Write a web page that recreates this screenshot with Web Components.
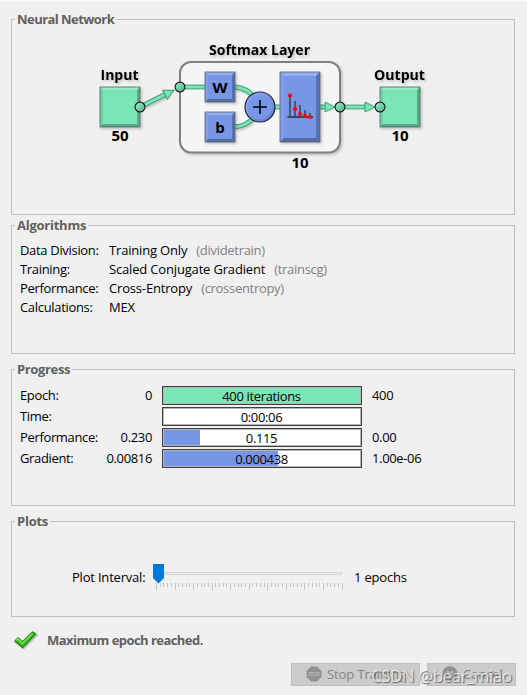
<!DOCTYPE html>
<html lang="en">
<head>
<meta charset="utf-8">
<title>Neural Network Training</title>
<style>
  body {
    margin: 0;
    background: #f0f0f0;
    color: #000;
    font: 13px/19px "Open Sans", "Noto Sans", sans-serif;
  }
</style>
</head>
<body>
<training-window></training-window>

<script>
  class GroupPanel extends HTMLElement {
    constructor() {
      super();
      const shadow = this.attachShadow({ mode: 'open' });
      shadow.innerHTML = `
        <style>
          :host {
            display: block;
            box-sizing: border-box;
            border: 1px solid #bfbfbf;
          }
          h2 {
            width: fit-content;
            margin: -9px 0 0 3px;
            padding: 0 2px;
            background: #f0f0f0;
            color: #606060;
            font-size: 13px;
            line-height: 16px;
            font-weight: 700;
            letter-spacing: var(--title-spacing, -0.55px);
          }
        </style>
        <h2>${this.getAttribute('label')}</h2>
        <slot></slot>
      `;
    }
  }

  class NetworkDiagram extends HTMLElement {
    constructor() {
      super();
      const shadow = this.attachShadow({ mode: 'open' });
      // Square block with bevelled edges
      const block = (x, y, w, h, b, c) => `
        <g filter="url(#soft)">
          <rect x="${x}" y="${y}" width="${w}" height="${h}" fill="${c[0]}"/>
          <path d="M${x} ${y}h${w}l${-b} ${b}h${2 * b - w}z" fill="${c[1]}"/>
          <path d="M${x} ${y}v${h}l${b} ${-b}v${2 * b - h}z" fill="${c[2]}"/>
          <path d="M${x + w} ${y}v${h}l${-b} ${-b}v${2 * b - h}z" fill="${c[3]}"/>
          <path d="M${x} ${y + h}h${w}l${-b} ${-b}h${2 * b - w}z" fill="${c[4]}"/>
          <rect x="${x}" y="${y}" width="${w}" height="${h}" fill="none" stroke="#58606c" stroke-width=".8"/>
        </g>`;
      const green = ['#7ae6b5', '#92efc5', '#6ed2a3', '#5aaa86', '#57a582'];
      const blue = ['#7896e6', '#94aef2', '#819eea', '#566fb0', '#546ba7'];
      const port = (x, y) => `<circle cx="${x}" cy="${y}" r="4.9" fill="url(#port)" stroke="#222" stroke-width="1.2"/>`;
      const wire = d => `
        <path d="${d}" fill="none" stroke="#469e77" stroke-width="4.8"/>
        <path d="${d}" fill="none" stroke="#7ae6b5" stroke-width="2.8"/>`;
      const head = (x, y, angle) => `
        <path d="M-5 -5L5 0L-5 5Z" transform="translate(${x} ${y}) rotate(${angle})" fill="#7ae6b5" stroke="#3c9870" stroke-width="1"/>`;
      const stems = [[290, 95.5, 96], [295, 109, 101], [300, 114, 105], [305, 116, 110], [310, 117, 113]];

      shadow.innerHTML = `
        <style>
          :host { display: block; margin-top: -7px; }
          svg { display: block; }
          text { font: 700 15px "Open Sans", "Noto Sans", sans-serif; text-anchor: middle; }
          .titles { filter: url(#soft); }
        </style>
        <svg width="502" height="192" viewBox="12 20 502 192">
          <defs>
            <filter id="soft" x="-20%" y="-20%" width="150%" height="150%">
              <feDropShadow dx="1.5" dy="1.5" stdDeviation="1" flood-color="#000" flood-opacity=".22"/>
            </filter>
            <linearGradient id="port" x1="0" y1="0" x2="1" y2="1">
              <stop offset="0" stop-color="#94f0c8"/>
              <stop offset="1" stop-color="#57ad87"/>
            </linearGradient>
            <linearGradient id="sum" x1="0" y1="0" x2="1" y2="1">
              <stop offset=".25" stop-color="#86a2ee"/>
              <stop offset="1" stop-color="#5d78bf"/>
            </linearGradient>
          </defs>
          <rect x="180" y="62" width="160" height="90.5" rx="11" fill="#f5f5f5" stroke="#808080" stroke-width="2" filter="url(#soft)"/>
          ${block(100, 87, 40, 40, 3, green)}
          ${block(380, 87, 40, 40, 3, green)}
          <g filter="url(#soft)">
            ${wire('M140 107L167 93.5')}
            ${wire('M235 87Q247 88 254 97')}
            ${wire('M235 127Q247 126 254 117')}
          </g>
          ${wire('M180 87H206')}
          ${wire('M272 107H326')}
          ${wire('M340 107H366')}
          ${head(169.5, 92.5, -27)}
          ${head(330, 107, 0)}
          ${head(370, 107, 0)}
          ${block(205, 72, 30, 30, 3, blue)}
          ${block(205, 112, 30, 30, 3, blue)}
          ${block(280, 72, 40, 70, 4, blue)}
          <circle cx="260" cy="107" r="15" fill="url(#sum)" stroke="#20263a" stroke-width="1.2"/>
          <circle cx="260" cy="107" r="12" fill="#7896e6"/>
          <path d="M253 107H267M260 100V114" stroke="#000" stroke-width="1.6"/>
          ${port(140, 107)}${port(180, 87)}${port(340, 107)}${port(380, 107)}
          <path d="M287.5 117H313" stroke="#111" stroke-width="1.2"/>
          ${stems.map(s => `<path d="M${s[0]} ${s[2]}V117" stroke="#333d55" stroke-width="1.4"/>`).join('')}
          ${stems.map(s => `<circle cx="${s[0]}" cy="${s[1]}" r="2.1" fill="#f00"/>`).join('')}
          <g class="titles">
            <text x="119.5" y="80" textLength="38" lengthAdjust="spacingAndGlyphs">Input</text>
            <text x="259.5" y="55" textLength="101" lengthAdjust="spacingAndGlyphs">Softmax Layer</text>
            <text x="399.5" y="80" textLength="51" lengthAdjust="spacingAndGlyphs">Output</text>
          </g>
          <text x="220" y="93" textLength="15" lengthAdjust="spacingAndGlyphs">W</text>
          <text x="220" y="133" textLength="9">b</text>
          <text x="120" y="141" textLength="17">50</text>
          <text x="300" y="168" textLength="17">10</text>
          <text x="400" y="141" textLength="17">10</text>
        </svg>
      `;
    }
  }

  class AlgorithmRow extends HTMLElement {
    constructor() {
      super();
      const shadow = this.attachShadow({ mode: 'open' });
      const fn = this.getAttribute('fn');
      shadow.innerHTML = `
        <style>
          :host { display: flex; height: 19px; padding-left: 8px; white-space: nowrap; }
          .name { width: 89px; letter-spacing: -0.32px; }
          .value { letter-spacing: -0.17px; }
          .fn { margin-left: 9px; color: #808080; letter-spacing: -0.3px; }
        </style>
        <span class="name">${this.getAttribute('name')}</span>
        <span class="value"><slot></slot></span>
        ${fn ? `<span class="fn">(${fn})</span>` : ''}
      `;
    }
  }

  class ProgressRow extends HTMLElement {
    constructor() {
      super();
      const shadow = this.attachShadow({ mode: 'open' });
      shadow.innerHTML = `
        <style>
          :host { display: flex; height: 19px; margin-bottom: 2px; padding-left: 8px; white-space: nowrap; letter-spacing: -0.35px; }
          .name { width: 82px; }
          .from { width: 50px; text-align: right; }
          .bar {
            box-sizing: border-box;
            width: 200px;
            height: 19px;
            margin: 0 10px;
            border: 1px solid #404040;
            box-shadow: inset 0 0 0 1px #b4b4b4;
            padding: 0 2px 0 1px;
            line-height: 18px;
            text-align: center;
            background: linear-gradient(${this.getAttribute('color')} 0 0) 1px 1px / ${this.getAttribute('fill')}px 15px no-repeat #fff;
          }
        </style>
        <span class="name">${this.getAttribute('name')}</span>
        <span class="from">${this.getAttribute('from') || ''}</span>
        <div class="bar"><slot></slot></div>
        <span>${this.getAttribute('to') || ''}</span>
      `;
    }
  }

  class IntervalSlider extends HTMLElement {
    constructor() {
      super();
      const shadow = this.attachShadow({ mode: 'open' });
      let ticks = '';
      for (let i = 0; i <= 50; i++) {
        const x = Math.round(3 + i * 3.71) + 0.5;
        ticks += `M${x} 19v${i % 5 ? 4 : 7}`;
      }
      shadow.innerHTML = `
        <style>
          :host { display: block; }
          svg { display: block; }
        </style>
        <svg width="190" height="27">
          <rect x=".5" y="8.5" width="188" height="2" fill="#e7eaea" stroke="#d6d6d6"/>
          <path d="${ticks}" stroke="#c4c4c4" fill="none"/>
          <path d="M0 0H11V14L5.5 19.5L0 14Z" fill="#0078d7"/>
        </svg>
      `;
    }
  }

  class ActionButton extends HTMLElement {
    constructor() {
      super();
      const shadow = this.attachShadow({ mode: 'open' });
      const icons = {
        stop: `<path d="M5 .5H11L15.5 5V11L11 15.5H5L.5 11V5Z" fill="#919191"/>
               <text x="8" y="10" font-size="5" font-weight="700" text-anchor="middle" textLength="12" fill="#b8b8b8">STOP</text>`,
        cancel: `<circle cx="8" cy="8" r="7.7" fill="#919191"/>
                 <path d="M5 5L11 11M11 5L5 11" stroke="#b8b8b8" stroke-width="2"/>`
      };
      shadow.innerHTML = `
        <style>
          :host {
            display: flex;
            box-sizing: border-box;
            height: 23px;
            align-items: center;
            padding-left: 14px;
            gap: 5px;
            border: 1px solid #bfbfbf;
            background: #ccc;
            color: #838383;
            letter-spacing: -0.1px;
          }
          svg { margin-top: -2px; }
        </style>
        <svg width="16" height="16">${icons[this.getAttribute('icon')]}</svg>
        <span><slot></slot></span>
      `;
    }
  }

  class TrainingWindow extends HTMLElement {
    constructor() {
      super();
      const shadow = this.attachShadow({ mode: 'open' });
      shadow.innerHTML = `
        <style>
          :host {
            display: flex;
            flex-direction: column;
            box-sizing: border-box;
            position: relative;
            width: 527px;
            height: 695px;
            padding: 18px 12px 0 11px;
            border-top: 1px solid #fafafa;
            overflow: hidden;
          }
          .network { height: 196px; margin-bottom: 10px; }
          .algorithms { height: 129px; margin-bottom: 15px; --title-spacing: -0.25px; }
          .progress { height: 137px; margin-bottom: 15px; --title-spacing: -0.35px; }
          .plots { height: 96px; --title-spacing: -0.25px; }
          .rows { padding-top: 8px; }
          .progress .rows { padding-top: 9px; }
          .interval { display: flex; padding: 35px 0 0 60px; white-space: nowrap; letter-spacing: -0.2px; }
          .interval .label { width: 81px; padding-top: 4px; }
          .interval .value { margin-left: 11px; padding-top: 4px; }
          .status { display: flex; align-items: center; gap: 9px; height: 26px; margin: 10px 0 0 2px; color: #606060; font-weight: 700; }
          .status span { letter-spacing: -0.55px; }
          .buttons { display: flex; gap: 7px; margin: 10px -1px 0 280px; }
          .stop { width: 129px; }
          .cancel { width: 89px; }
          .mark {
            position: absolute;
            left: 371px;
            top: 665px;
            font-size: 17px;
            line-height: 20px;
            letter-spacing: -0.53px;
            white-space: nowrap;
            color: rgba(238, 238, 238, .85);
            text-shadow: 1px 1px 1px #666;
          }
        </style>
        <group-panel class="network" label="Neural Network">
          <network-diagram></network-diagram>
        </group-panel>
        <group-panel class="algorithms" label="Algorithms">
          <div class="rows">
            <algorithm-row name="Data Division:" fn="dividetrain">Training Only</algorithm-row>
            <algorithm-row name="Training:" fn="trainscg">Scaled Conjugate Gradient</algorithm-row>
            <algorithm-row name="Performance:" fn="crossentropy">Cross-Entropy</algorithm-row>
            <algorithm-row name="Calculations:">MEX</algorithm-row>
          </div>
        </group-panel>
        <group-panel class="progress" label="Progress">
          <div class="rows">
            <progress-row name="Epoch:" from="0" to="400" color="#7ae6b5" fill="196">400 iterations</progress-row>
            <progress-row name="Time:" color="#7896e6" fill="0">0:00:06</progress-row>
            <progress-row name="Performance:" from="0.230" to="0.00" color="#7896e6" fill="36">0.115</progress-row>
            <progress-row name="Gradient:" from="0.00816" to="1.00e-06" color="#7896e6" fill="114">0.000438</progress-row>
          </div>
        </group-panel>
        <group-panel class="plots" label="Plots">
          <div class="interval">
            <span class="label">Plot Interval:</span>
            <interval-slider></interval-slider>
            <span class="value">1 epochs</span>
          </div>
        </group-panel>
        <div class="status">
          <svg width="25" height="21">
            <path d="M2.5 12L6 8.5L10 12.5L20.5 2.5L24 5L10.5 18.5Z" fill="#999" stroke="#999" stroke-width="2" stroke-linejoin="round" opacity=".6"/>
            <path d="M2 11L5 8L9.5 12L19.5 2L22.5 4L9.5 17.5Z" fill="#35b51d" stroke="#249010" stroke-width="1.5" stroke-linejoin="round"/>
            <path d="M3 10.5L5 9L9.5 13.5L19.5 3.5" fill="none" stroke="#7ee35e" stroke-width="1.5"/>
          </svg>
          <span>Maximum epoch reached.</span>
        </div>
        <div class="buttons">
          <action-button class="stop" icon="stop">Stop Training</action-button>
          <action-button class="cancel" icon="cancel">Cancel</action-button>
        </div>
        <div class="mark">CSDN @bear_miao</div>
      `;
    }
  }

  customElements.define('group-panel', GroupPanel);
  customElements.define('network-diagram', NetworkDiagram);
  customElements.define('algorithm-row', AlgorithmRow);
  customElements.define('progress-row', ProgressRow);
  customElements.define('interval-slider', IntervalSlider);
  customElements.define('action-button', ActionButton);
  customElements.define('training-window', TrainingWindow);
</script>
</body>
</html>
